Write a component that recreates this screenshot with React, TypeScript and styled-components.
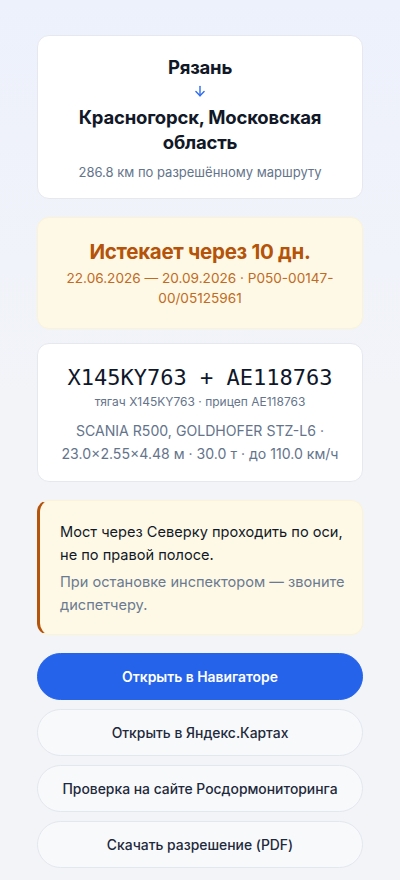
import React from 'react';
import styled, { createGlobalStyle } from 'styled-components';

const GlobalStyle = createGlobalStyle`
	html, body {
		margin: 0;
		padding: 0;
	}
	body {
		font-family: Inter, "Noto Sans", sans-serif;
		background: linear-gradient(180deg, #edf1fc 0%, #f2f4f8 45%, #f3f4f7 100%);
		min-height: 880px;
		-webkit-font-smoothing: antialiased;
	}
`;

const Page = styled.main`
	display: flex;
	flex-direction: column;
	padding: 35px 37px 12px;
	box-sizing: border-box;
	width: 400px;
`;

const Card = styled.section<{ $tone?: 'white' | 'cream'; $gap?: number }>`
	background: ${(p) => (p.$tone === 'cream' ? '#fef9e6' : '#ffffff')};
	border: 1px solid ${(p) => (p.$tone === 'cream' ? '#fbf3d6' : '#e5e8ef')};
	border-radius: 12px;
	text-align: center;
	box-sizing: border-box;
	margin-bottom: ${(p) => p.$gap ?? 16}px;
`;

const RouteCard = styled(Card)`
	padding: 19px 16px 17px;
`;

const City = styled.div`
	font-weight: 700;
	font-size: 18.5px;
	line-height: 25px;
	color: #111827;
	letter-spacing: -0.2px;
`;

const Arrow = styled.div`
	color: #2f6cf0;
	height: 22px;
	display: flex;
	justify-content: center;
	align-items: center;
	margin: 0 0 3px;
`;

const Hint = styled.div`
	margin-top: 8px;
	font-size: 13px;
	line-height: 18px;
	color: #64748b;
`;

const ExpiryCard = styled(Card)`
	padding: 21px 16px 20px;
`;

const ExpiryTitle = styled.div`
	font-weight: 700;
	font-size: 20.5px;
	line-height: 26px;
	color: #b45309;
	letter-spacing: -0.3px;
`;

const ExpiryMeta = styled.div`
	margin-top: 3px;
	font-size: 13.6px;
	line-height: 20px;
	color: #c26a22;
`;

const VehicleCard = styled(Card)`
	padding: 19px 16px 16px;
`;

const Plate = styled.div`
	font-family: "DejaVu Sans Mono", "Liberation Mono", monospace;
	font-size: 22px;
	line-height: 30px;
	color: #0f172a;
	white-space: pre;
`;

const PlateSub = styled.div`
	font-size: 12px;
	line-height: 16px;
	color: #64748b;
	margin-top: 1px;
`;

const Specs = styled.div`
	margin-top: 9px;
	font-size: 14.1px;
	line-height: 23px;
	color: #64748b;
`;

const NoteCard = styled(Card)`
	text-align: left;
	padding: 20px 16px 17px 20px;
	border-left: 3px solid #b45309;
`;

const NoteText = styled.p<{ $muted?: boolean }>`
	margin: ${(p) => (p.$muted ? '4px 0 0' : '0')};
	font-size: 14.6px;
	line-height: 23px;
	color: ${(p) => (p.$muted ? '#6b7a90' : '#111827')};
`;

const Actions = styled.div`
	display: flex;
	flex-direction: column;
	gap: 9px;
`;

const Button = styled.button<{ $primary?: boolean }>`
	height: 47px;
	border-radius: 24px;
	font-family: Inter, "Noto Sans", sans-serif;
	font-size: 13.9px;
	font-weight: ${(p) => (p.$primary ? 600 : 500)};
	color: ${(p) => (p.$primary ? '#ffffff' : '#1e293b')};
	background: ${(p) => (p.$primary ? '#2563eb' : '#f8f9fb')};
	border: 1px solid ${(p) => (p.$primary ? '#2563eb' : '#e3e7ee')};
	cursor: pointer;
`;

const ArrowDown = () => (
	<svg width="14" height="14" viewBox="0 0 24 24" fill="none" stroke="currentColor" strokeWidth="2.4" strokeLinecap="round" strokeLinejoin="round">
		<path d="M12 4v16" />
		<path d="M5 13l7 7 7-7" />
	</svg>
);

const App = () => {
	return (
		<>
			<GlobalStyle />
			<Page>
				<RouteCard $gap={18}>
					<City>Рязань</City>
					<Arrow>
						<ArrowDown />
					</Arrow>
					<City>Красногорск, Московская область</City>
					<Hint>286.8 км по разрешённому маршруту</Hint>
				</RouteCard>

				<ExpiryCard $tone="cream" $gap={14}>
					<ExpiryTitle>Истекает через 10 дн.</ExpiryTitle>
					<ExpiryMeta>22.06.2026 — 20.09.2026 · Р050-00147-00/05125961</ExpiryMeta>
				</ExpiryCard>

				<VehicleCard $gap={18}>
					<Plate>{'X145KY763 + AE118763'}</Plate>
					<PlateSub>тягач X145KY763 · прицеп AE118763</PlateSub>
					<Specs>SCANIA R500, GOLDHOFER STZ-L6 · 23.0×2.55×4.48 м · 30.0 т · до 110.0 км/ч</Specs>
				</VehicleCard>

				<NoteCard $tone="cream" $gap={18}>
					<NoteText>Мост через Северку проходить по оси, не по правой полосе.</NoteText>
					<NoteText $muted>При остановке инспектором — звоните диспетчеру.</NoteText>
				</NoteCard>

				<Actions>
					<Button $primary>Открыть в Навигаторе</Button>
					<Button>Открыть в Яндекс.Картах</Button>
					<Button>Проверка на сайте Росдормониторинга</Button>
					<Button>Скачать разрешение (PDF)</Button>
				</Actions>
			</Page>
		</>
	);
};

export default App;
